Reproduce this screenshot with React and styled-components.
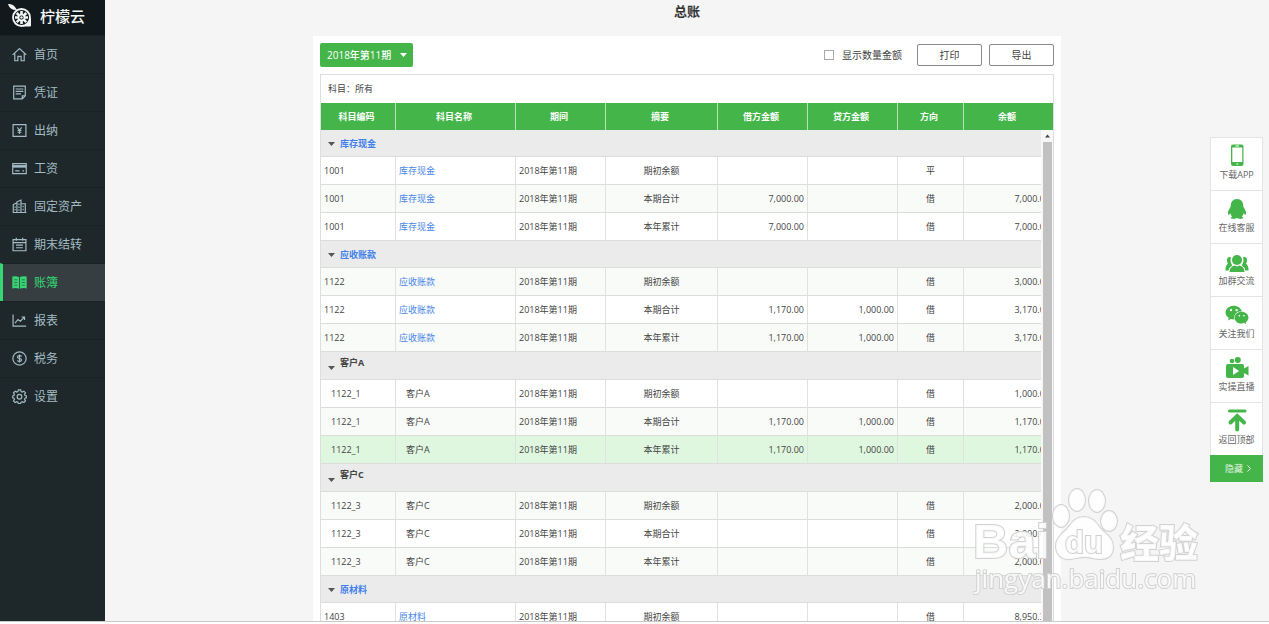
import { useState } from 'react'
import styled, { createGlobalStyle, css } from 'styled-components'
import { FaWeixin } from 'react-icons/fa'

const GlobalStyle = createGlobalStyle`
    * {
        box-sizing: border-box;
    }
    body {
        margin: 0;
        background: #fff;
        color: #444;
        font-family: 'Open Sans', 'Noto Sans CJK SC', sans-serif;
        font-size: 9px;
    }
    button, select, input {
        margin: 0;
        font-family: inherit;
    }
    a {
        text-decoration: none;
    }
`

const Page = styled.div`
    display: flex;
    flex-direction: column;
    height: 100vh;
`

const Shell = styled.div`
    display: flex;
    flex: 1;
    min-height: 0;
    overflow: hidden;
    background: #f5f5f5;
`

const BottomEdge = styled.div`
    height: 3px;
    border-top: 1px solid #c9c9c9;
`

const Sidebar = styled.aside`
    flex: 0 0 105px;
    background: #1e272a;
`

const Brand = styled.a`
    display: flex;
    align-items: center;
    gap: 8px;
    height: 35px;
    padding: 0 0 4px 8px;
    background: #11191c;
    color: #f4f6f6;
    font-size: 15px;
    font-weight: 500;
    line-height: 20px;
`

const NavItem = styled.a`
    display: flex;
    align-items: center;
    gap: 7px;
    height: 38px;
    padding-left: 9px;
    border-left: 3px solid transparent;
    border-top: 1px solid #1a2225;
    color: #a3bcc4;
    font-size: 12px;
    line-height: 16px;

    ${({ $active }) =>
        $active &&
        css`
            border-left-color: #35d673;
            background: #363e42;
            color: #35d673;
        `}
`

const Main = styled.main`
    display: flex;
    flex: 1;
    flex-direction: column;
    align-items: center;
    min-width: 0;
`

const Title = styled.h1`
    margin: 0;
    padding: 2px 0 16px;
    color: #333;
    font-size: 13px;
    font-weight: 700;
    line-height: 18px;
`

const Card = styled.section`
    display: flex;
    flex: 1;
    flex-direction: column;
    width: 100%;
    max-width: 748px;
    min-height: 0;
    padding: 7px 7px 0;
    background: #fff;
`

const Toolbar = styled.div`
    display: flex;
    justify-content: space-between;
    align-items: center;
    height: 24px;
    margin-bottom: 7px;
`

const ToolGroup = styled.div`
    display: flex;
    align-items: center;
    gap: 7px;
`

const PeriodPicker = styled.div`
    position: relative;
    display: flex;

    svg {
        position: absolute;
        top: 10px;
        right: 6px;
        pointer-events: none;
    }
`

const PeriodSelect = styled.select`
    width: 93px;
    height: 24px;
    padding: 0 7px;
    border: none;
    border-radius: 2px;
    appearance: none;
    background: #44b549;
    color: #fff;
    font-size: 10px;
    font-weight: 500;
`

const CheckLabel = styled.label`
    display: flex;
    align-items: center;
    gap: 8px;
    margin-right: 8px;
    font-size: 10px;
    line-height: 16px;

    input {
        width: 10px;
        height: 10px;
        border: 1px solid #aaa;
        appearance: none;
        background: #fff;
    }
    input:checked {
        background: #44b549;
    }
`

const OutlineButton = styled.button`
    width: 65px;
    height: 22px;
    padding: 0;
    border: 1px solid #8a8a8a;
    border-radius: 2px;
    background: #fff;
    color: #444;
    font-size: 10px;
    line-height: 18px;
`

const Ledger = styled.div`
    display: flex;
    flex: 1;
    flex-direction: column;
    min-height: 0;
    border: 1px solid #dcdfdc;
    border-bottom: none;
`

const Subject = styled.div`
    padding: 0 7px;
    line-height: 28px;
`

const LedgerTable = styled.table`
    width: 100%;
    border-collapse: separate;
    border-spacing: 0;
    table-layout: fixed;
`

const HeadCell = styled.th`
    height: 27px;
    padding: 0 3px 0 0;
    border-right: 1px solid #b9e2bb;
    background: #44b549;
    color: #fff;
    font-weight: 700;
    line-height: 16px;
    text-align: center;

    &:last-child {
        border-right: none;
    }
`

const Body = styled.div`
    display: flex;
    flex: 1;
    min-height: 0;
`

const Viewport = styled.div`
    flex: 1;
    min-width: 0;
    overflow: hidden;

    ${LedgerTable} {
        width: calc(100% + 12px);
    }
`

const ScrollTrack = styled.div`
    display: flex;
    flex: 0 0 12px;
    flex-direction: column;
    align-items: center;
    padding: 4px 1px 0 2px;
    background: #f7f7f7;
`

const ScrollThumb = styled.div`
    flex: 1;
    width: 100%;
    margin-top: 4px;
    background: #c1c1c1;
`

const GroupCell = styled.th`
    height: ${({ $sub }) => ($sub ? '28px' : '27px')};
    padding: ${({ $sub }) => ($sub ? '0 7px' : '2px 7px 0')};
    border-bottom: 1px solid #dcdcdc;
    background: #ebebeb;
    text-align: left;
`

const GroupToggle = styled.button`
    display: flex;
    align-items: ${({ $sub }) => ($sub ? 'flex-end' : 'center')};
    gap: 5px;
    padding: 0;
    border: none;
    background: none;
    color: ${({ $sub }) => ($sub ? '#444' : '#3f80ea')};
    font-size: 9px;
    font-weight: 700;
    line-height: 14px;

    span {
        padding-bottom: ${({ $sub }) => ($sub ? '6px' : '0')};
    }
    svg {
        margin-bottom: ${({ $sub }) => ($sub ? '6px' : '0')};
    }
`

const Row = styled.tr`
    background: ${({ $tone }) => ({ plain: '#fff', striped: '#f9fbf9', hover: '#dff6df' })[$tone]};
`

const Cell = styled.td`
    height: 28px;
    padding: 0 3px 0 ${({ $indent }) => ($indent ? '10px' : '3px')};
    border-right: 1px solid #dfe2df;
    border-bottom: 1px solid #dcdcdc;
    line-height: 16px;
    text-align: ${({ $align }) => $align || 'left'};
    white-space: nowrap;

    &:last-child {
        border-right: none;
    }
    a {
        color: #4a86e8;
    }
`

const FloatBar = styled.aside`
    position: fixed;
    top: 137px;
    right: 6px;
    display: flex;
    flex-direction: column;
    width: 53px;
`

const FloatLink = styled.a`
    display: flex;
    flex-direction: column;
    align-items: center;
    height: 53px;
    padding-top: 5px;
    border: 1px solid #e4e4e4;
    border-bottom: none;
    background: #fff;
    color: #666;
    line-height: 12px;

    svg {
        width: 24px;
        height: 26px;
        color: #44b549;
    }
`

const HideButton = styled.button`
    display: flex;
    justify-content: center;
    align-items: center;
    gap: 4px;
    height: 27px;
    padding: 0 0 0 3px;
    border: none;
    background: #44b549;
    color: #e4f6e5;
    font-size: 9px;
`

const Watermark = styled.svg`
    position: fixed;
    right: 60px;
    bottom: 24px;
    pointer-events: none;
`

const navItems = [
    { name: '首页', icon: 'home' },
    { name: '凭证', icon: 'voucher' },
    { name: '出纳', icon: 'cashier' },
    { name: '工资', icon: 'salary' },
    { name: '固定资产', icon: 'assets' },
    { name: '期末结转', icon: 'closing' },
    { name: '账簿', icon: 'book', active: true },
    { name: '报表', icon: 'report' },
    { name: '税务', icon: 'tax' },
    { name: '设置', icon: 'settings' },
]

const navIcons = {
    home: <path d="M.6 7.4 7 1.4l6.4 6M2.6 6v6.8h2.9V8.8h3v4h2.900V6" />,
    voucher: (
        <>
            <path d="M1.6 1h10.800v9L9.600 13H1.600zM12.400 10H9.600v3" />
            <path d="M3.400 3.700h7.200M3.400 6h7.200M3.400 8.300h5" />
        </>
    ),
    cashier: (
        <>
            <path d="M1 1.500h12v11H1z" />
            <path d="M5 4l2 2.800L9 4M7 6.800v3.400M5.200 7h3.600M5.200 8.600h3.600" />
        </>
    ),
    salary: (
        <>
            <path d="M.7 2.500h12.600v9.200H.7z" />
            <path d="M.7 5h12.600" strokeWidth="2.400" />
            <path d="M3 9.200h4M9.600 9.200h1.600" />
        </>
    ),
    assets: (
        <>
            <path d="M1.200 12.600V5.200L4.600 3.600M4.600 12.600V2.600L8.400 1v11.600M8.400 4.400h4v8.200M.6 12.600h12.800" />
            <path d="M6.500 4.200v1.400M6.500 7v1.400M6.500 9.600V11M10.400 6.400v1.200M10.400 9v1.600M2.900 7v1.200M2.900 9.400v1.200" />
        </>
    ),
    closing: (
        <>
            <path d="M1 2.400h12v10.400H1zM1 5.300h12M4 .8v2.800M10 .8v2.800" />
            <path d="M3.800 7.600h6.400M3.800 10h6.400" />
        </>
    ),
    book: (
        <>
            <path
                d="M.3 1.500q3.400-.8 6.300.3v11q-2.900-1-6.300-.3zM13.700 1.500q-3.400-.8-6.300.3v11q2.900-1 6.300-.3z"
                fill="currentColor"
                stroke="none"
            />
            <path d="M2 4.500h3M2 7h3M2 9.500h3M9 4.500h3M9 7h3M9 9.500h3" stroke="#363e42" strokeWidth=".6" />
        </>
    ),
    report: <path d="M1 1.400v10.900h12.200M2.800 9.400 5.600 6l2.200 1.600 3.800-3.800M8.900 3.700h2.800v2.800" />,
    tax: (
        <>
            <circle cx="7" cy="7" r="6.200" />
            <path d="M9 5.200Q8.600 4.300 7 4.300q-1.900 0-1.900 1.300T7 7t1.900 1.400T7 9.700Q5.400 9.700 5 8.800M7 3.200v7.600" />
        </>
    ),
    settings: (
        <>
            <path d="M5.900.8h2.200l.4 1.600 1.100.5 1.500-.9 1.500 1.500-.9 1.500.5 1.100 1.200.3v1.800l-1.200.4-.5 1.100.9 1.500-1.500 1.500-1.500-.9-1.100.5-.4 1.200H5.900l-.4-1.200-1.100-.5-1.500.9-1.500-1.500.9-1.500-.5-1.100L.7 8.200V6.400l1.100-.3.5-1.100-.9-1.500L2.900 2l1.500.9 1.100-.5z" />
            <circle cx="7" cy="7.200" r="2.200" />
        </>
    ),
}

const columns = [
    { name: '科目编码', width: 75 },
    { name: '科目名称', width: 120 },
    { name: '期间', width: 90 },
    { name: '摘要', width: 112 },
    { name: '借方金额', width: 90 },
    { name: '贷方金额', width: 90 },
    { name: '方向', width: 66 },
    { name: '余额' },
]

const period = '2018年第11期'

const groups = [
    {
        name: '库存现金',
        code: '1001',
        rows: [
            ['期初余额', '', '', '平', ''],
            ['本期合计', '7,000.00', '', '借', '7,000.00'],
            ['本年累计', '7,000.00', '', '借', '7,000.00'],
        ],
    },
    {
        name: '应收账款',
        code: '1122',
        rows: [
            ['期初余额', '', '', '借', '3,000.00'],
            ['本期合计', '1,170.00', '1,000.00', '借', '3,170.00'],
            ['本年累计', '1,170.00', '1,000.00', '借', '3,170.00'],
        ],
    },
    {
        name: '客户A',
        code: '1122_1',
        sub: true,
        selected: 2,
        rows: [
            ['期初余额', '', '', '借', '1,000.00'],
            ['本期合计', '1,170.00', '1,000.00', '借', '1,170.00'],
            ['本年累计', '1,170.00', '1,000.00', '借', '1,170.00'],
        ],
    },
    {
        name: '客户C',
        code: '1122_3',
        sub: true,
        rows: [
            ['期初余额', '', '', '借', '2,000.00'],
            ['本期合计', '', '', '借', '2,000.00'],
            ['本年累计', '', '', '借', '2,000.00'],
        ],
    },
    {
        name: '原材料',
        code: '1403',
        rows: [['期初余额', '', '', '借', '8,950.30']],
    },
]

const floatItems = [
    {
        name: '下载APP',
        icon: (
            <svg viewBox="0 0 24 26">
                <rect x="6" y="1.500" width="12.500" height="21.500" rx="2" fill="currentColor" />
                <path d="M7.300 4.500h10V19h-10z" fill="#fff" />
                <path d="M10.500 3h3.500M11.300 21h2" stroke="#fff" />
            </svg>
        ),
    },
    {
        name: '在线客服',
        icon: (
            <svg viewBox="0 0 24 26">
                <path
                    d="M12 3C7.800 3 5.800 6 5.800 9.500c0 1-.3 1.600-.9 2.500-1.600 2.300-2.500 4.700-1.700 6.500.5.600 1.500-.2 2.100-1.300.3 1.300 1 2.400 1.800 3.200-1.200.5-1.500 1-1.300 1.700.3 1.100 4.900 1.100 6.200 0 1.300 1.100 5.900 1.100 6.200 0 .2-.7-.1-1.200-1.300-1.700.8-.8 1.500-1.900 1.800-3.200.6 1.100 1.600 1.900 2.100 1.300.8-1.800-.1-4.200-1.700-6.500-.6-.9-.9-1.500-.9-2.500C18.200 6 16.200 3 12 3z"
                    fill="currentColor"
                />
            </svg>
        ),
    },
    {
        name: '加群交流',
        icon: (
            <svg viewBox="0 0 24 26" fill="currentColor">
                <circle cx="12" cy="11" r="5" />
                <path d="M4.500 23q0-5.500 5.300-6.500l2.200 1 2.200-1q5.300 1 5.300 6.500z" />
                <path d="M6 8.200q-4-.8-4 3.200 0 2 1 3.200Q.5 16.500.4 21.500h3.200q.8-3.500 3.600-5Q4.500 12 6 8.200zM18 8.200q4-.8 4 3.200 0 2-1 3.200 2.500 1.900 2.600 6.900h-3.200q-.8-3.500-3.600-5Q19.500 12 18 8.200z" />
            </svg>
        ),
    },
    { name: '关注我们', icon: <FaWeixin /> },
    {
        name: '实操直播',
        icon: (
            <svg viewBox="0 0 24 26" fill="currentColor">
                <circle cx="7" cy="6" r="2.300" />
                <circle cx="12.800" cy="5" r="3" />
                <rect x="1" y="9" width="18" height="14" rx="2" />
                <path d="M18 14l5.500-3v9.500L18 17.500z" />
                <path d="M8 12v8l6.200-4z" fill="#fff" />
            </svg>
        ),
    },
    {
        name: '返回顶部',
        icon: (
            <svg viewBox="0 0 24 26" fill="none" stroke="currentColor" strokeLinecap="round">
                <path d="M4.500 3h15.500" strokeWidth="3" />
                <path d="M5.500 14.500l6.700-6.500 6.800 6.500M12.200 9v12.500" strokeWidth="4" />
            </svg>
        ),
    },
]

function Caret({ color = '#555' }) {
    return (
        <svg width="7" height="4" viewBox="0 0 7 4" aria-hidden="true">
            <path d="M0 0h7L3.500 4z" fill={color} />
        </svg>
    )
}

function LemonLogo() {
    return (
        <svg width="24" height="26" viewBox="0 0 24 26" fill="none" stroke="#f4f6f6">
            <path d="M0 1q5.500-1 9 6Q2 7.500 0 1z" fill="#f4f6f6" stroke="none" />
            <circle cx="13.500" cy="14.500" r="8.500" strokeWidth="1.800" />
            <path d="M15 23h7.500v-7.500q0 6-7.500 7.500z" fill="#f4f6f6" strokeWidth="1" />
            <path
                d="M13.500 12.500V8M15 13.200l3.300-3.200M15.500 14.500H20M15 15.900l3.300 3.200M13.500 16.500V21M12 15.900l-3.300 3.200M11.500 14.500H7M12 13.200 8.700 10"
                strokeWidth="2.600"
            />
            <circle cx="13.500" cy="14.500" r="1.200" fill="#f4f6f6" stroke="none" />
        </svg>
    )
}

function Columns() {
    return (
        <colgroup>
            {columns.map((col) => (
                <col key={col.name} width={col.width} />
            ))}
        </colgroup>
    )
}

function LedgerBody() {
    const [closed, setClosed] = useState([])
    let index = 0

    function toggle(code) {
        setClosed(closed.includes(code) ? closed.filter((c) => c !== code) : [...closed, code])
    }

    return (
        <LedgerTable aria-label="总账">
            <Columns />
            {groups.map(({ name, code, sub, selected, rows }) => (
                <tbody key={code}>
                    <tr>
                        <GroupCell colSpan={columns.length} $sub={sub}>
                            <GroupToggle $sub={sub} aria-expanded={!closed.includes(code)} onClick={() => toggle(code)}>
                                <Caret />
                                <span>{name}</span>
                            </GroupToggle>
                        </GroupCell>
                    </tr>
                    {!closed.includes(code) &&
                        rows.map(([summary, debit, credit, direction, balance], i) => {
                            index += 1
                            const tone = selected === i ? 'hover' : index % 2 ? 'plain' : 'striped'
                            return (
                                <Row key={summary} $tone={tone}>
                                    <Cell $indent={sub}>{code}</Cell>
                                    <Cell $indent={sub}>{sub ? name : <a href="#detail">{name}</a>}</Cell>
                                    <Cell>{period}</Cell>
                                    <Cell $align="center">{summary}</Cell>
                                    <Cell $align="right">{debit}</Cell>
                                    <Cell $align="right">{credit}</Cell>
                                    <Cell $align="center">{direction}</Cell>
                                    <Cell $align="right">{balance}</Cell>
                                </Row>
                            )
                        })}
                </tbody>
            ))}
        </LedgerTable>
    )
}

function BaiduMark() {
    return (
        <Watermark width="236" height="116" viewBox="0 0 236 116" aria-hidden="true">
            <g fill="#fff" fillOpacity=".85" stroke="#d2d2d2" strokeWidth="2" paintOrder="stroke">
                <text x="0" y="74" fontFamily="Liberation Sans, sans-serif" fontSize="49" fontWeight="700">
                    Bai
                </text>
                <ellipse cx="88" cy="32" rx="8" ry="11" />
                <ellipse cx="104" cy="16" rx="8" ry="11" />
                <ellipse cx="124" cy="17" rx="8" ry="11" />
                <ellipse cx="136" cy="37" rx="8" ry="10" />
                <path d="M111 33c-9 0-12 6-17 12-6 6-12 10-11 19 1 8 7 12 15 11 6-1 9-2 14-2s9 2 15 2c9 0 13-4 13-12 0-9-6-12-12-18-5-6-8-12-17-12z" />
                <text x="92" y="69" fontFamily="Liberation Sans, sans-serif" fontSize="31" fontWeight="700">
                    du
                </text>
                <text x="147" y="73" fontFamily="Noto Sans CJK SC, sans-serif" fontSize="39" fontWeight="900">
                    经验
                </text>
                <text x="2" y="104" fontFamily="Open Sans, sans-serif" fontSize="26" fontWeight="500">
                    jingyan.baidu.com
                </text>
            </g>
        </Watermark>
    )
}

function App() {
    const [showAmount, setShowAmount] = useState(false)
    const [floatOpen, setFloatOpen] = useState(true)

    return (
        <Page>
            <GlobalStyle />
            <Shell>
                <Sidebar>
                    <Brand href="#home">
                        <LemonLogo />
                        柠檬云
                    </Brand>
                    <nav>
                        {navItems.map((item) => (
                            <NavItem key={item.name} href={`#${item.icon}`} $active={item.active}>
                                <svg
                                    width="15"
                                    height="15"
                                    viewBox="0 0 14 14"
                                    fill="none"
                                    stroke="currentColor"
                                    strokeWidth="1.100"
                                >
                                    {navIcons[item.icon]}
                                </svg>
                                {item.name}
                            </NavItem>
                        ))}
                    </nav>
                </Sidebar>
                <Main>
                    <Title>总账</Title>
                    <Card>
                        <Toolbar>
                            <PeriodPicker>
                                <PeriodSelect aria-label="期间">
                                    <option>{period}</option>
                                </PeriodSelect>
                                <Caret color="#fff" />
                            </PeriodPicker>
                            <ToolGroup>
                                <CheckLabel>
                                    <input
                                        type="checkbox"
                                        checked={showAmount}
                                        onChange={(e) => setShowAmount(e.target.checked)}
                                    />
                                    显示数量金额
                                </CheckLabel>
                                <OutlineButton>打印</OutlineButton>
                                <OutlineButton>导出</OutlineButton>
                            </ToolGroup>
                        </Toolbar>
                        <Ledger>
                            <Subject>科目：所有</Subject>
                            <LedgerTable aria-label="表头">
                                <Columns />
                                <thead>
                                    <tr>
                                        {columns.map((col) => (
                                            <HeadCell key={col.name}>{col.name}</HeadCell>
                                        ))}
                                    </tr>
                                </thead>
                            </LedgerTable>
                            <Body>
                                <Viewport>
                                    <LedgerBody />
                                </Viewport>
                                <ScrollTrack>
                                    <svg width="5" height="4" viewBox="0 0 5 4" aria-hidden="true">
                                        <path d="M0 3.500h5L2.500.5z" fill="#444" />
                                    </svg>
                                    <ScrollThumb />
                                </ScrollTrack>
                            </Body>
                        </Ledger>
                    </Card>
                </Main>
            </Shell>
            <BottomEdge />
            <FloatBar>
                {floatOpen &&
                    floatItems.map((item) => (
                        <FloatLink key={item.name} href="#service">
                            {item.icon}
                            {item.name}
                        </FloatLink>
                    ))}
                <HideButton onClick={() => setFloatOpen(!floatOpen)}>
                    隐藏
                    <svg width="4" height="7" viewBox="0 0 4 7" fill="none" stroke="currentColor">
                        <path d="M.5.5l3 3-3 3" />
                    </svg>
                </HideButton>
            </FloatBar>
            <BaiduMark />
        </Page>
    )
}

export default App
